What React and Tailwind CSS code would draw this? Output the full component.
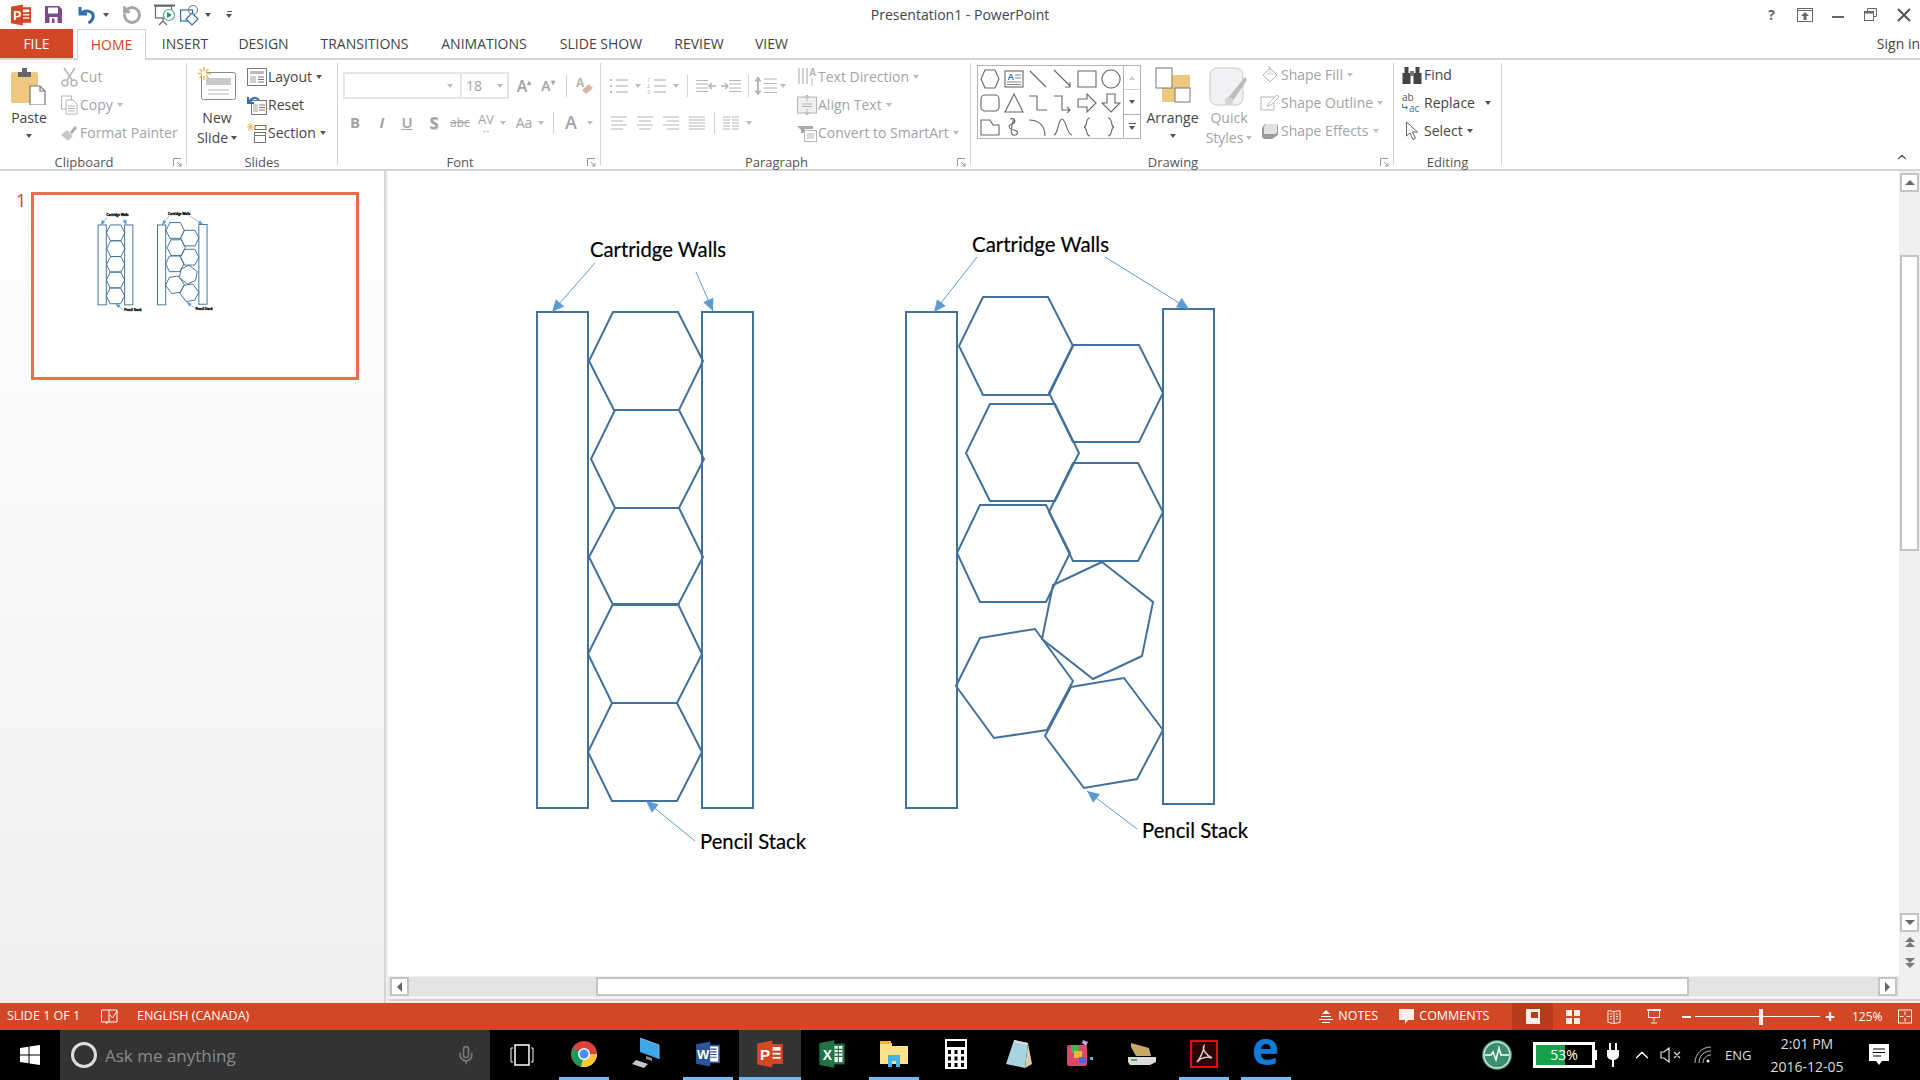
import { RotateCcw, Mic, ChevronUp } from "lucide-react";

const DIM = "text-[#a3a3a3]";

const Caret = ({ dark }) => (
  <span className={dark ? "inline-block w-0 h-0 border-x-[3.5px] border-t-[4px] border-x-transparent border-t-[#555]" : "inline-block w-0 h-0 border-x-[3.5px] border-t-[4px] border-x-transparent border-t-[#bdbdbd]"} />
);

const PptLogo = ({ size = 22 }) => (
  <svg width={size} height={size} viewBox="0 0 24 24">
    <rect x="11" y="3.5" width="12" height="17" fill="#d24726" />
    <rect x="14" y="6" width="7" height="3" fill="#fff" />
    <rect x="14" y="11" width="7" height="1.5" fill="#fff" />
    <rect x="14" y="14.5" width="7" height="1.5" fill="#fff" />
    <polygon points="1,3 14,0.5 14,23.5 1,21" fill="#d24726" />
    <text x="3.5" y="17" fontSize="13" fontWeight="700" fill="#fff" fontFamily="'Liberation Sans', sans-serif">P</text>
  </svg>
);

const SaveIcon = () => (
  <svg width="17" height="17" viewBox="0 0 17 17">
    <path d="M0 0h14l3 3v14H0z" fill="#80498f" />
    <rect x="3" y="1.5" width="10" height="6" fill="#fff" />
    <rect x="4.5" y="11" width="8" height="6" fill="#fff" />
    <rect x="7" y="12.5" width="2.5" height="4.5" fill="#80498f" />
  </svg>
);

const UndoIcon = () => (
  <svg width="20" height="20" viewBox="0 0 20 20" fill="none" stroke="#2f6fb0" strokeWidth="3">
    <path d="M3 2v7h7" />
    <path d="M3.5 9C6 5.5 11 5 14.5 7.5c3 2.5 2 7.5-3 10.5" />
  </svg>
);

const PresenterIcon = () => (
  <svg width="21" height="22" viewBox="0 0 21 22" fill="none" stroke="#666" strokeWidth="1.2">
    <path d="M0 1.5h21" strokeWidth="2" />
    <rect x="1.5" y="2" width="16" height="12" />
    <path d="M9 14v3M5 21l4-4 4 4" />
    <circle cx="15" cy="11" r="5.5" fill="#fff" stroke="#5fa98f" />
    <polygon points="13,8 18,11 13,14" fill="#2f8f6b" stroke="none" />
  </svg>
);

const ShapesQat = () => (
  <svg width="21" height="22" viewBox="0 0 21 22" fill="none" strokeWidth="1.2">
    <rect x="0.6" y="6" width="12" height="11" fill="#fff" stroke="#2f6fb0" />
    <circle cx="13" cy="6" r="4.5" stroke="#888" />
    <path d="M12 9l6 6-6 6-6-6z" fill="#fff" stroke="#2f6fb0" />
  </svg>
);

const PasteIcon = () => (
  <svg width="35" height="38" viewBox="0 0 35 38">
    <rect x="0" y="5" width="27" height="31" rx="2" fill="#edc87e" />
    <path d="M7 5h13v5H7z" fill="#666" />
    <rect x="11" y="1" width="5" height="5" fill="#666" />
    <path d="M19 19h10l5 5v14H19z" fill="#fff" stroke="#777" strokeWidth="1.2" />
    <path d="M29 19v5h5" fill="none" stroke="#777" strokeWidth="1.2" />
  </svg>
);

const CutIcon = () => (
  <svg width="17" height="20" viewBox="0 0 17 20" fill="none" stroke="#b5b5b5" strokeWidth="1.5">
    <path d="M3 1l8 12M14 1L6 13" />
    <circle cx="4" cy="16" r="3" />
    <circle cx="13" cy="16" r="3" />
  </svg>
);

const CopyIcon = () => (
  <svg width="17" height="20" viewBox="0 0 17 20" fill="#fff" stroke="#b5b5b5">
    <rect x="0.5" y="1" width="10" height="13" />
    <path d="M5 5h7l4 4v10H5z" />
    <path d="M7 11h7M7 13.5h7M7 16h7" />
  </svg>
);

const PainterIcon = () => (
  <svg width="18" height="18" viewBox="0 0 18 18">
    <path d="M1 11l6-5 6 6-5 5z" fill="#c8c8c8" />
    <path d="M10 8l5-6 2 2-5 6z" fill="#a8a8a8" />
  </svg>
);

const NewSlideIcon = () => (
  <svg width="38" height="33" viewBox="0 0 38 33">
    <rect x="3.5" y="5.5" width="34" height="27" rx="2" fill="#fff" stroke="#8a8a8a" />
    <rect x="8" y="11" width="25" height="7" fill="#c9c9c9" />
    <path d="M10 23h21M10 27h21" stroke="#b5b5b5" />
    <g stroke="#e8b45e" strokeWidth="1.5">
      <path d="M6 0v13M0 6.5h13M1.500 2l9 9M10.500 2l-9 9" />
    </g>
    <circle cx="6" cy="6.5" r="2.5" fill="#fff" />
  </svg>
);

const LayoutIcon = () => (
  <svg width="20" height="18" viewBox="0 0 20 18" fill="none" stroke="#777">
    <rect x="0.5" y="0.5" width="19" height="17" />
    <rect x="3" y="3" width="14" height="3" fill="#bbb" stroke="none" />
    <rect x="3" y="8" width="6" height="7" fill="#d0d0d0" stroke="none" />
    <path d="M11 9h6M11 11.5h6M11 14h6" />
  </svg>
);

const ResetIcon = () => (
  <svg width="20" height="20" viewBox="0 0 20 20" fill="none">
    <rect x="4.5" y="5.5" width="15" height="14" stroke="#777" fill="#fff" />
    <rect x="6" y="9" width="5" height="8" fill="#d0d0d0" />
    <path d="M12 10h6M12 12.5h6M12 15h6" stroke="#777" />
    <path d="M1 2v6h6M2 7c3-5 8-5 10-2" stroke="#2f6fb0" strokeWidth="2" />
  </svg>
);

const SectionIcon = () => (
  <svg width="20" height="20" viewBox="0 0 20 20" fill="none">
    <path d="M3 0v8M0 4h7M1 1l5 6M6 1l-5 6" stroke="#e8b45e" />
    <rect x="8" y="2.5" width="11" height="4" stroke="#d24726" />
    <rect x="7.5" y="9.5" width="11" height="10" stroke="#777" />
    <path d="M8 12.5h10" stroke="#777" />
  </svg>
);

const BulletsIcon = ({ nums }) => (
  <svg width="20" height="20" viewBox="0 0 20 20" stroke="#a8a8a8" fill="#a8a8a8">
    {nums ? (
      <>
        <text x="0" y="6" fontSize="5" stroke="none">1</text>
        <text x="0" y="12" fontSize="5" stroke="none">2</text>
        <text x="0" y="18" fontSize="5" stroke="none">3</text>
      </>
    ) : (
      <>
        <circle cx="2" cy="4" r="1" stroke="none" />
        <circle cx="2" cy="10" r="1" stroke="none" />
        <circle cx="2" cy="16" r="1" stroke="none" />
      </>
    )}
    <path d="M7 4h12M7 10h12M7 16h12" />
  </svg>
);

const IndentIcon = ({ flip }) => (
  <svg width="20" height="14" viewBox="0 0 20 14" fill="none" stroke="#b5b5b5" className={flip ? "-scale-x-100" : ""}>
    <path d="M8 1.5h12M8 5h12M8 9h12M8 12.5h12" />
    <path d="M0 7h7M4 4l3 3-3 3" strokeWidth="1.5" />
  </svg>
);

const LineSpacingIcon = () => (
  <svg width="24" height="24" viewBox="0 0 24 24" fill="none" stroke="#b5b5b5">
    <path d="M4 3v18" strokeWidth="2" />
    <path d="M1 7l3-4 3 4zM1 17l3 4 3-4z" fill="#b5b5b5" />
    <path d="M10 5h13M10 9.5h13M10 14h13M10 18.5h13" />
  </svg>
);

const AlignIcon = ({ kind }) => {
  const rows = {
    left: "M1 3h16M1 7h12M1 11h16M1 15h12",
    center: "M1 3h16M3 7h12M1 11h16M3 15h12",
    right: "M1 3h16M5 7h12M1 11h16M5 15h12",
    justify: "M1 3h16M1 6h16M1 9h16M1 12h16M1 15h16",
    columns: "M1 3h7M10 3h7M1 6h7M10 6h7M1 9h7M10 9h7M1 12h7M10 12h7M1 15h7M10 15h7",
  };
  return (
    <svg width="18" height="18" viewBox="0 0 18 18" fill="none" stroke="#b5b5b5">
      <path d={rows[kind]} />
    </svg>
  );
};

const TextDirIcon = () => (
  <svg width="20" height="20" viewBox="0 0 20 20" stroke="#b5b5b5" fill="none">
    <path d="M2 1v16M6 1v16M10 1v16" strokeWidth="1.2" />
    <text x="12" y="9" fontSize="10" fontWeight="700" fill="#b5b5b5" stroke="none" fontFamily="'Liberation Sans', sans-serif">A</text>
    <path d="M15 11v8" />
  </svg>
);

const AlignTextIcon = () => (
  <svg width="20" height="20" viewBox="0 0 20 20" stroke="#b5b5b5" fill="none">
    <rect x="0.5" y="2" width="19" height="16" fill="#f0f0f0" />
    <path d="M10 0v6M7.500 3L10 0l2.500 3M10 14v6M7.500 17l2.500 3 2.500-3M5 9h10M5 11.5h10" />
  </svg>
);

const SmartArtIcon = () => (
  <svg width="20" height="20" viewBox="0 0 20 20" stroke="#b5b5b5" fill="none">
    <path d="M0 3h16v3H8v4H4V7z" fill="#aaa" stroke="none" />
    <rect x="7.5" y="7.5" width="12" height="11" fill="#fff" />
    <path d="M10 11h7M10 13h7M10 15h7" />
  </svg>
);

const ShapeFillIcon = () => (
  <svg width="18" height="18" viewBox="0 0 18 18" fill="#fff" stroke="#b5b5b5">
    <path d="M2 9l7-7 7 7-7 7z" />
    <path d="M7 1c2-1 3 1 2 3" fill="none" />
    <path d="M4 9l5-5 5 5" fill="#e5e5e5" stroke="none" />
  </svg>
);

const ShapeOutlineIcon = () => (
  <svg width="20" height="18" viewBox="0 0 20 18" fill="none" stroke="#b5b5b5">
    <path d="M14 3H1v13h13V9" />
    <path d="M7 12l2-3 8-8 2 2-8 8z" fill="#fff" />
  </svg>
);

const ShapeEffectsIcon = () => (
  <svg width="18" height="18" viewBox="0 0 18 18">
    <path d="M4 2h12l1 2v9l-6 4H3l-2-2V6z" fill="#9a9a9a" />
    <path d="M5 2h11v8c0 1-1 2-2 2H3V5z" fill="#e2e2e2" />
  </svg>
);

const BinocularsIcon = () => (
  <svg width="20" height="18" viewBox="0 0 20 18" fill="#444">
    <rect x="0.5" y="7" width="8" height="11" />
    <rect x="11.5" y="7" width="8" height="11" />
    <rect x="2.5" y="1" width="4" height="7" />
    <rect x="13.5" y="1" width="4" height="7" />
    <rect x="8" y="5" width="4" height="5" fill="#777" />
  </svg>
);

const ReplaceIcon = () => (
  <svg width="22" height="22" viewBox="0 0 22 22" fontFamily="'Open Sans', sans-serif">
    <text x="1" y="9" fontSize="10" fill="#555">ab</text>
    <path d="M1.500 12v3.500H6M4.500 14l2 1.500-2 1.500" fill="none" stroke="#2f6fb0" />
    <text x="8" y="20" fontSize="10" fill="#2f6fb0">ac</text>
  </svg>
);

const CursorIcon = () => (
  <svg width="14" height="20" viewBox="0 0 14 20" fill="#fff" stroke="#666">
    <path d="M1.500 1v14l3.500-3 3 6.500 2.500-1.200-3-6.300h5z" />
  </svg>
);

const ArrangeIcon = () => (
  <svg width="36" height="36" viewBox="0 0 36 36">
    <rect x="17" y="8" width="18" height="13" fill="#edc87e" />
    <rect x="7" y="21" width="16" height="14" fill="#edc87e" />
    <rect x="1" y="1" width="16" height="20" fill="#fff" stroke="#777" />
    <rect x="20" y="21" width="15" height="14" fill="#fff" stroke="#777" />
  </svg>
);

const QuickStylesIcon = () => (
  <svg width="40" height="42" viewBox="0 0 40 42">
    <rect x="1" y="1" width="33" height="37" rx="7" fill="#f3f0f5" stroke="#c8c8c8" />
    <path d="M38 13L23 35l-5 2 1-6 17-21z" fill="#bbb" />
    <circle cx="20" cy="34" r="4" fill="#d5d5d5" />
  </svg>
);

// gallery shape thumbnails, 6 x 3
const galleryPaths = [
  "M5 1h10l4 9-4 9H5l-4-9z",
  null,
  "M2 2l16 16",
  "M1 1l16 16M12 18h5v-5",
  "M1 2h18v16H1z",
  "M10 1a9 9 0 1 0 .01 0z",
  "M5 2h10a4 4 0 0 1 4 4v8a4 4 0 0 1-4 4H5a4 4 0 0 1-4-4V6a4 4 0 0 1 4-4z",
  "M10 1L19 19H1z",
  "M1 3h8v14h10",
  "M1 3h8v14h8M14 14l3 3-3 3",
  "M1 6h9V1l9 9-9 9v-5H1z",
  "M6 1h8v9h5l-9 9-9-9h5z",
  "M1 3h9l3 5h6v10H1V8z",
  "M6 2c6-2 6 4 2 5s-4 5 2 6 3 6-1 5 0-14 1-16",
  "M1 3c9 0 16 5 16 16",
  "M1 18C5 18 5 2 9 2s5 16 10 16",
  "M13 1c-5 0-2 8-6 9 4 1 1 9 6 9",
  "M7 1c5 0 2 8 6 9-4 1-1 9-6 9",
];

const Gallery = () => (
  <div className="flex w-[164px] h-[74px] border border-[#b4b4b4]">
    <div className="grid grid-cols-6 w-[146px] pt-px">
      {galleryPaths.map((d, i) => (
        <div key={i} className="flex items-center justify-center h-6">
          <svg width="20" height="20" viewBox="0 0 20 20" fill="none" stroke="#666" strokeWidth="1.1">
            {d ? (
              <path d={d} />
            ) : (
              <>
                <rect x="1" y="2" width="18" height="16" />
                <text x="3.5" y="11" fontSize="9" fontWeight="700" fill="#2f6fb0" stroke="none" fontFamily="'Liberation Sans', sans-serif">A</text>
                <path d="M11 6h6M11 9h6M3 13h14M3 15.500h14" strokeWidth="0.8" />
              </>
            )}
          </svg>
        </div>
      ))}
    </div>
    <div className="flex flex-col w-[17px] border-l border-[#b4b4b4]">
      <div className="flex flex-1 items-center justify-center border-b border-[#d0d0d0]">
        <span className="w-0 h-0 border-x-[3.5px] border-b-[4px] border-x-transparent border-b-[#ccc]" />
      </div>
      <div className="flex flex-1 items-center justify-center border-b border-[#b4b4b4]">
        <Caret dark />
      </div>
      <div className="flex flex-col flex-1 items-center justify-center gap-[2px]">
        <span className="w-[7px] h-px bg-[#555]" />
        <Caret dark />
      </div>
    </div>
  </div>
);

const Group = ({ className, label, launcher, children }) => (
  <div className={"flex flex-col h-full shrink-0 border-r border-[#d4d4d4] " + className}>
    <div className="flex flex-1 min-h-0">{children}</div>
    <div className="grid grid-cols-[1fr_auto_1fr] h-[14px] items-center text-[13px] leading-none text-[#555]">
      <span />
      <span className={launcher ? "mt-[5px] mr-[18px]" : "mt-[5px]"}>{label}</span>
      {launcher ? (
        <svg className="justify-self-end mr-[4px] mt-[5px]" width="9" height="9" viewBox="0 0 9 9" fill="none" stroke="#999">
          <path d="M0.5 8V0.5H8M4 4l4 4M8 5v3H5" />
        </svg>
      ) : (
        <span />
      )}
    </div>
  </div>
);

const RowBtn = ({ icon, label, caret, dim, iconClass, textClass }) => (
  <div className={"flex items-center h-[28px] text-[14px] leading-none whitespace-nowrap " + (dim ? DIM : "text-[#444]")}>
    <span className={"flex items-center justify-center shrink-0 " + (iconClass || "w-[22px]")}>{icon}</span>
    <span className={textClass}>{label}</span>
    {caret && (
      <span className="ml-[4px] flex items-center">
        <Caret dark={!dim} />
      </span>
    )}
  </div>
);

const Cell = ({ className, children }) => (
  <span className={"flex items-center justify-center shrink-0 " + className}>{children}</span>
);

const Sep = ({ className }) => <span className={"w-px h-[22px] bg-[#d4d4d4] shrink-0 " + className} />;

const Ribbon = () => (
  <div className="flex h-[111px] pt-[3px] pb-[4px] border-b-2 border-[#d4d4d4] bg-white">
    <Group className="w-[187px]" label="Clipboard" launcher>
      <div className="flex flex-col items-center w-[50px] ml-[4px] pt-[4px] text-[14px] text-[#444]">
        <div className="-ml-[2px]"><PasteIcon /></div>
        <span className="mt-[4px] leading-[18px]">Paste</span>
        <span className="mt-[7px] flex"><Caret dark /></span>
      </div>
      <div className="flex flex-col ml-[4px]">
        <RowBtn dim icon={<CutIcon />} label="Cut" />
        <RowBtn dim icon={<CopyIcon />} label="Copy" caret />
        <RowBtn dim icon={<PainterIcon />} label="Format Painter" />
      </div>
    </Group>
    <Group className="w-[151px]" label="Slides">
      <div className="flex flex-col items-center w-[44px] ml-[8px] pt-[4px] text-[14px] text-[#444] whitespace-nowrap">
        <NewSlideIcon />
        <span className="mt-[9px] leading-[18px]">New</span>
        <span className="flex items-center gap-[3px] leading-[21px]">Slide <Caret dark /></span>
      </div>
      <div className="flex flex-col ml-[6px]">
        <RowBtn iconClass="w-[23px]" icon={<LayoutIcon />} label="Layout" caret />
        <RowBtn iconClass="w-[23px]" icon={<ResetIcon />} label="Reset" />
        <RowBtn iconClass="w-[23px]" icon={<SectionIcon />} label="Section" caret />
      </div>
    </Group>
    <Group className="w-[263px]" label="Font" launcher>
      <div className={"flex flex-col pl-[5px] pt-[9px] text-[15px] font-semibold " + DIM}>
        <div className="flex items-center h-[27px]">
          <div className="flex items-center justify-end w-[119px] h-full border-2 border-[#e6e6e6] pr-[7px]"><Caret /></div>
          <div className="flex items-center justify-between w-[47px] h-full border-2 border-l-0 border-[#e6e6e6] px-[4px] font-normal text-[14px]">18 <Caret /></div>
          <Cell className="w-6 ml-[3px] text-[16px]">A<sup className="text-[8px]">▴</sup></Cell>
          <Cell className="w-6 text-[14px]">A<sup className="text-[8px]">▾</sup></Cell>
          <Sep className="ml-[6px]" />
          <Cell className="w-6 ml-[6px]">
            <svg width="18" height="20" viewBox="0 0 18 20">
              <text x="0" y="11" fontSize="12" fontWeight="700" fill="#b5b5b5" fontFamily="'Open Sans', sans-serif">A</text>
              <path d="M6 14l7-6 4 4-7 6z" fill="#d8b4a8" />
            </svg>
          </Cell>
        </div>
        <div className="flex items-center h-[27px] mt-[10px]">
          <Cell className="w-6 font-bold">B</Cell>
          <Cell className="w-6 ml-[3px] italic font-bold">I</Cell>
          <Cell className="w-6 ml-px underline">U</Cell>
          <Cell className="w-6 ml-[3px] font-bold text-[16px] [text-shadow:1px_1px_1px_#ccc]">S</Cell>
          <Cell className="w-6 ml-[2px] text-[12px] font-normal line-through">abc</Cell>
          <Cell className="w-6 ml-[2px] flex-col text-[13px] leading-[12px] font-normal">AV<span className="text-[10px] leading-[8px]">↔</span></Cell>
          <Cell className="w-[10px]"><Caret /></Cell>
          <Cell className="w-6 ml-1 text-[14px] font-normal">Aa</Cell>
          <Cell className="w-[10px]"><Caret /></Cell>
          <Sep className="ml-[7px]" />
          <Cell className="w-6 ml-[5px] text-[18px]">A</Cell>
          <Cell className="w-[10px] ml-[2px]"><Caret /></Cell>
        </div>
      </div>
    </Group>
    <Group className="w-[370px]" label="Paragraph" launcher>
      <div className="flex flex-col w-[195px] pl-[6px] pt-[9px]">
        <div className="flex items-center h-[27px]">
          <Cell className="w-6"><BulletsIcon /></Cell>
          <Cell className="w-[10px] ml-[2px]"><Caret /></Cell>
          <Cell className="w-6 ml-[2px]"><BulletsIcon nums /></Cell>
          <Cell className="w-[10px] ml-[2px]"><Caret /></Cell>
          <Sep className="ml-[6px]" />
          <Cell className="w-6 ml-[6px]"><IndentIcon flip /></Cell>
          <Cell className="w-6 ml-px"><IndentIcon /></Cell>
          <Sep className="ml-[5px]" />
          <Cell className="w-6 ml-[5px]"><LineSpacingIcon /></Cell>
          <Cell className="w-[10px]"><Caret /></Cell>
        </div>
        <div className="flex items-center h-[27px] mt-[10px]">
          <Cell className="w-6"><AlignIcon kind="left" /></Cell>
          <Cell className="w-6 ml-[2px]"><AlignIcon kind="center" /></Cell>
          <Cell className="w-6 ml-[2px]"><AlignIcon kind="right" /></Cell>
          <Cell className="w-6 ml-[2px]"><AlignIcon kind="justify" /></Cell>
          <Sep className="ml-[5px]" />
          <Cell className="w-6 ml-[4px]"><AlignIcon kind="columns" /></Cell>
          <Cell className="w-[10px] ml-px"><Caret /></Cell>
        </div>
      </div>
      <div className="flex flex-col">
        <RowBtn dim icon={<TextDirIcon />} label="Text Direction" caret />
        <RowBtn dim icon={<AlignTextIcon />} label="Align Text" caret />
        <RowBtn dim icon={<SmartArtIcon />} label="Convert to SmartArt" caret />
      </div>
    </Group>
    <Group className="w-[423px]" label="Drawing" launcher>
      <div className="ml-[6px] pt-[2px]"><Gallery /></div>
      <div className="flex flex-col items-center w-[53px] ml-[5px] pt-[4px] text-[14px] text-[#444]">
        <ArrangeIcon />
        <span className="mt-[6px] leading-[18px]">Arrange</span>
        <span className="mt-[7px] flex"><Caret dark /></span>
      </div>
      <div className={"flex flex-col items-center w-[48px] ml-[6px] pt-[4px] text-[14px] whitespace-nowrap " + DIM}>
        <QuickStylesIcon />
        <span className="leading-[18px]">Quick</span>
        <span className="flex items-center gap-[3px] leading-[21px]">Styles <Caret /></span>
      </div>
      <div className="flex flex-col ml-[5px] -mt-[2px]">
        <RowBtn dim iconClass="w-[23px]" icon={<ShapeFillIcon />} label="Shape Fill" caret />
        <RowBtn dim iconClass="w-[23px]" icon={<ShapeOutlineIcon />} label="Shape Outline" caret />
        <RowBtn dim iconClass="w-[23px]" icon={<ShapeEffectsIcon />} label="Shape Effects" caret />
      </div>
    </Group>
    <Group className="w-[108px]" label="Editing">
      <div className="flex flex-col pl-[6px] -mt-[2px]">
        <RowBtn iconClass="w-[24px]" icon={<BinocularsIcon />} label="Find" />
        <div className="flex items-center">
          <RowBtn iconClass="w-[24px]" icon={<ReplaceIcon />} label="Replace" />
          <span className="ml-[10px] flex"><Caret dark /></span>
        </div>
        <RowBtn iconClass="w-[24px]" icon={<CursorIcon />} label="Select" caret />
      </div>
    </Group>
    <div className="flex flex-1 items-end justify-end pr-[11px] pb-[1px]">
      <ChevronUp size={14} strokeWidth={2} color="#555" />
    </div>
  </div>
);

const TitleBar = () => (
  <div className="grid grid-cols-[1fr_auto_1fr] h-[29px] items-center bg-white">
    <div className="flex items-center">
      <Cell className="w-[22px] ml-[10px]"><PptLogo /></Cell>
      <Cell className="w-[17px] ml-[13px]"><SaveIcon /></Cell>
      <Cell className="w-5 ml-[15px]"><UndoIcon /></Cell>
      <Cell className="w-2 ml-[5px]"><Caret dark /></Cell>
      <Cell className="w-5 ml-[12px]"><RotateCcw size={20} strokeWidth={3.5} color="#a6a6a6" /></Cell>
      <Cell className="w-[21px] ml-[12px]"><PresenterIcon /></Cell>
      <Cell className="w-[21px] ml-[5px]"><ShapesQat /></Cell>
      <Cell className="w-2 ml-[3px]"><Caret dark /></Cell>
      <Cell className="w-2 ml-[13px] flex-col gap-[2px]"><span className="w-[5px] h-px bg-[#555]" /><Caret dark /></Cell>
    </div>
    <span className="text-[14px] leading-none text-[#444]">Presentation1 - PowerPoint</span>
    <div className="flex justify-end text-[#666]">
      <Cell className="w-[33px] font-bold text-[14px]">?</Cell>
      <Cell className="w-[33px]">
        <svg width="16" height="14" viewBox="0 0 16 14" fill="none" stroke="#666">
          <rect x="0.5" y="0.5" width="15" height="13" />
          <path d="M0 2.5h16" />
          <path d="M8 4l4 4H9.500v4h-3V8H4z" fill="#666" stroke="none" />
        </svg>
      </Cell>
      <Cell className="w-[33px]"><span className="w-[12px] h-[2px] mt-[5px] bg-[#666]" /></Cell>
      <Cell className="w-[33px]">
        <svg width="13" height="13" viewBox="0 0 13 13" fill="none" stroke="#666">
          <path d="M3.500 3V0.500h9v8H10" />
          <rect x="0.5" y="3.5" width="9" height="9" fill="#fff" />
          <path d="M0.5 4.5h9" strokeWidth="2" />
        </svg>
      </Cell>
      <Cell className="w-[33px]">
        <svg width="14" height="14" viewBox="0 0 14 14" stroke="#555" strokeWidth="2">
          <path d="M1 1l12 12M13 1L1 13" />
        </svg>
      </Cell>
    </div>
  </div>
);

const tabClass = "flex items-center justify-center shrink-0 ";

const Tabs = () => (
  <div className="flex h-[31px] border-b-2 border-[#d4d4d4] text-[14px] leading-none text-[#444] bg-white">
    <div className={tabClass + "w-[73px] bg-[#d24726] text-white"}>FILE</div>
    <div className={tabClass + "w-[69px] ml-[4px] bg-white text-[#d24726] border-x border-t border-[#d4d4d4] h-[31px]"}>HOME</div>
    <div className={tabClass + "w-[78px]"}>INSERT</div>
    <div className={tabClass + "w-[79px]"}>DESIGN</div>
    <div className={tabClass + "w-[123px]"}>TRANSITIONS</div>
    <div className={tabClass + "w-[116px]"}>ANIMATIONS</div>
    <div className={tabClass + "w-[118px]"}>SLIDE SHOW</div>
    <div className={tabClass + "w-[78px]"}>REVIEW</div>
    <div className={tabClass + "w-[67px]"}>VIEW</div>
    <div className="flex flex-1 items-center justify-end whitespace-nowrap">Sign in</div>
  </div>
);

const WALL_BLUE = "#41719c";
const ARROW_BLUE = "#5b9bd5";

const walls = [
  [537, 312, 51, 496],
  [702, 312, 51, 496],
  [906, 312, 51, 496],
  [1163, 309, 51, 495],
];

const hexagons = [
  "613,312 678,312 703,361 679,410 614,410 589,361",
  "615,410 679,410 704,459 679,508 615,508 591,459",
  "615,508 679,508 703,557 678,605 613,605 589,557",
  "613,604 678,604 702,654 677,703 612,703 588,654",
  "612,703 677,703 702,752 677,801 612,801 588,752",
  "983,297 1048,297 1073,346 1049,395 983,395 959,346",
  "1073,345 1139,345 1163,393 1139,442 1073,442 1049,393",
  "990,404 1055,404 1079,453 1055,501 990,501 966,453",
  "1073,463 1138,463 1163,512 1138,561 1073,561 1049,512",
  "980,505 1046,505 1070,553 1046,602 980,602 957,553",
  "1102,562 1153,602 1142,656 1093,679 1042,639 1053,585",
  "980,638 1035,629 1073,681 1047,730 994,738 956,686",
  "1071,687 1124,678 1163,730 1137,779 1084,788 1045,736",
];

const arrows = [
  [595, 263, 552, 312],
  [696, 272, 713, 311],
  [977, 257, 934, 312],
  [1105, 257, 1189, 309],
  [695, 841, 646, 801],
  [1137, 829, 1087, 791],
];

const labels = [
  ["Cartridge Walls", 590, 257, 136],
  ["Cartridge Walls", 972, 252, 137],
  ["Pencil Stack", 700, 849, 106],
  ["Pencil Stack", 1142, 838, 106],
];

function arrowHead(x1, y1, x2, y2, len, half) {
  const d = Math.hypot(x2 - x1, y2 - y1);
  const ux = (x2 - x1) / d;
  const uy = (y2 - y1) / d;
  const bx = x2 - ux * len;
  const by = y2 - uy * len;
  return `${x2},${y2} ${bx - uy * half},${by + ux * half} ${bx + uy * half},${by - ux * half}`;
}

const Drawing = ({ stroke, arrowStroke, len, half, textStroke }) => (
  <g fill="none">
    {walls.map(([x, y, w, h], i) => (
      <rect key={i} x={x} y={y} width={w} height={h} stroke={WALL_BLUE} strokeWidth={stroke} />
    ))}
    {hexagons.map((p, i) => (
      <polygon key={i} points={p} stroke={WALL_BLUE} strokeWidth={stroke} />
    ))}
    {arrows.map(([x1, y1, x2, y2], i) => (
      <g key={i}>
        <line x1={x1} y1={y1} x2={x2} y2={y2} stroke={ARROW_BLUE} strokeWidth={arrowStroke} />
        <polygon points={arrowHead(x1, y1, x2, y2, len, half)} fill={ARROW_BLUE} />
      </g>
    ))}
    {labels.map(([t, x, y, w], i) => (
      <text key={i} x={x} y={y} fontSize="21" fill="#000" textLength={w} lengthAdjust="spacingAndGlyphs" fontFamily="Lato, 'Open Sans', sans-serif" stroke="#000" strokeWidth={textStroke}>
        {t}
      </text>
    ))}
  </g>
);

const ScrollBtn = ({ children }) => (
  <div className="flex items-center justify-center w-[19px] h-[19px] shrink-0 bg-white border-2 border-[#c4c4c4]">{children}</div>
);

const Workspace = () => (
  <div className="flex flex-1 min-h-0">
    <div className="flex items-start w-[386px] shrink-0 pt-[21px] pl-[16px] border-r-2 border-[#d4d4d4] bg-gradient-to-b from-white to-[#f0f0f0]">
      <span className="w-[15px] text-[18px] leading-[16px] text-[#d24726]">1</span>
      <div className="w-[328px] h-[188px] border-[3px] border-[#ed6c4d] bg-white">
        <svg className="block" width="322" height="182" viewBox="139 126 2000 1130">
          <Drawing stroke={6} arrowStroke={4} len={30} half={12} textStroke={2} />
        </svg>
      </div>
    </div>
    <div className="flex flex-col flex-1 min-w-0 bg-[#f0f0f0]">
      <div className="flex flex-1 min-h-0 pl-[2px]">
        <div className="flex-1 bg-white">
          <svg className="block" width="1511" height="805" viewBox="388 171 1511 805">
            <Drawing stroke={2} arrowStroke={1} len={12} half={5.5} textStroke={0.2} />
          </svg>
        </div>
        <div className="flex flex-col w-[21px] pl-px pt-[2px]">
          <ScrollBtn><span className="w-0 h-0 border-x-[5px] border-b-[5px] border-x-transparent border-b-[#666]" /></ScrollBtn>
          <div className="h-[63px] shrink-0" />
          <div className="w-[19px] h-[296px] shrink-0 bg-white border-2 border-[#c4c4c4]" />
          <div className="flex-1" />
          <ScrollBtn><span className="w-0 h-0 border-x-[5px] border-t-[5px] border-x-transparent border-t-[#666]" /></ScrollBtn>
          <div className="flex flex-col items-center w-[19px] h-[44px] pt-[5px] gap-[11px] shrink-0">
            <span className="flex flex-col items-center">
              <span className="w-0 h-0 border-x-[5px] border-b-[5px] border-x-transparent border-b-[#777]" />
              <span className="w-0 h-0 border-x-[5px] border-b-[5px] border-x-transparent border-b-[#777]" />
            </span>
            <span className="flex flex-col items-center">
              <span className="w-0 h-0 border-x-[5px] border-t-[5px] border-x-transparent border-t-[#777]" />
              <span className="w-0 h-0 border-x-[5px] border-t-[5px] border-x-transparent border-t-[#777]" />
            </span>
          </div>
        </div>
      </div>
      <div className="flex flex-col h-[27px] shrink-0 pl-[2px]">
        <div className="flex h-[19px] mt-px mr-[21px] pl-[2px] pr-[2px] bg-[#e3e3e3]">
          <ScrollBtn><span className="w-0 h-0 border-y-[5px] border-r-[5px] border-y-transparent border-r-[#666]" /></ScrollBtn>
          <div className="w-[187px] shrink-0" />
          <div className="w-[1093px] shrink-0 bg-white border-2 border-[#c4c4c4]" />
          <div className="flex-1" />
          <ScrollBtn><span className="w-0 h-0 border-y-[5px] border-l-[5px] border-y-transparent border-l-[#666]" /></ScrollBtn>
        </div>
        <div className="h-[2px] mt-[3px] bg-[#d4d4d4]" />
      </div>
    </div>
  </div>
);

const StatusBar = () => (
  <div className="flex items-center h-[27px] shrink-0 bg-[#d24726] text-[12.5px] leading-none text-white whitespace-nowrap">
    <span className="ml-[7px] w-[94px]">SLIDE 1 OF 1</span>
    <svg width="17" height="15" viewBox="0 0 17 15" fill="none" stroke="#fff">
      <path d="M0.5 1h7.500v12H0.500zM8 1h8v12H8M5 13l1 2M9 6l2.500 3L16 2" />
    </svg>
    <span className="ml-[19px]">ENGLISH (CANADA)</span>
    <div className="flex-1" />
    <svg className="mr-[5px]" width="14" height="14" viewBox="0 0 14 14" fill="#fff">
      <path d="M7 0l4 4H3z" />
      <path d="M2 6h10v1H2zM0 9h14v1H0zM3 12h8v1H3z" />
    </svg>
    <span className="w-[61px]">NOTES</span>
    <svg className="mr-[5px]" width="15" height="16" viewBox="0 0 15 16" fill="#fdeee9">
      <path d="M0 0h15v11H9l-3 4v-4H0z" />
    </svg>
    <span className="w-[93px]">COMMENTS</span>
    <Cell className="w-[41px] h-[27px] bg-[#b83b1d]">
      <svg width="14" height="15" viewBox="0 0 14 15">
        <rect width="14" height="15" fill="#fdeee9" />
        <rect x="5" y="3" width="7" height="6" fill="#b83b1d" />
      </svg>
    </Cell>
    <Cell className="w-[40px]">
      <svg width="14" height="14" viewBox="0 0 14 14" fill="#fdeee9">
        <rect width="6" height="6" />
        <rect x="8" width="6" height="6" />
        <rect y="8" width="6" height="6" />
        <rect x="8" y="8" width="6" height="6" />
      </svg>
    </Cell>
    <Cell className="w-[41px]">
      <svg width="14" height="14" viewBox="0 0 14 14" fill="none" stroke="#fdeee9">
        <path d="M7 1.500L1 0.500v12l6 1 6-1V0.500zM7 1.500v12M3 4h2M3 6.500h2M3 9h2M9 4h2M9 6.500h2M9 9h2" />
      </svg>
    </Cell>
    <Cell className="w-[40px]">
      <svg width="14" height="15" viewBox="0 0 14 15" fill="none" stroke="#fdeee9">
        <path d="M0 1h14" strokeWidth="2" />
        <rect x="1.5" y="1.5" width="11" height="7" />
        <path d="M7 8.500v4M4 14h6" />
      </svg>
    </Cell>
    <span className="w-[9px] h-[2px] ml-[8px] bg-white" />
    <div className="relative flex items-center w-[125px] ml-[4px]">
      <span className="w-full h-px bg-white" />
      <span className="absolute left-[64px] w-[4px] h-[16px] bg-[#fdeee9]" />
    </div>
    <span className="ml-[5px] text-[17px] font-bold leading-none">+</span>
    <span className="w-[31px] ml-[17px] text-[12px]">125%</span>
    <Cell className="w-[14px] ml-[15px] mr-[8px]">
      <svg width="15" height="15" viewBox="0 0 15 15" fill="none" stroke="#fff">
        <rect x="0.5" y="0.5" width="14" height="14" />
        <path d="M7.500 2v4M7.500 9v4M2 7.500h4M9 7.500h4" />
      </svg>
    </Cell>
  </div>
);

const TaskIcon = ({ children, active, bar }) => (
  <div className={active ? "flex flex-col w-[62px] h-full shrink-0 bg-[#333]" : "flex flex-col w-[62px] h-full shrink-0"}>
    <div className="flex flex-1 items-center justify-center">{children}</div>
    {bar ? <div className={active ? "h-[3px] bg-[#76b9ed]" : "h-[3px] mx-[6px] bg-[#76b9ed]"} /> : <div className="h-[3px]" />}
  </div>
);

const Chrome = () => (
  <svg width="26" height="26" viewBox="0 0 26 26">
    <circle cx="13" cy="13" r="13" fill="#dc4437" />
    <path d="M13 13L2 7A13 13 0 0 0 10 25.700z" fill="#1d9a57" />
    <path d="M13 13h13A13 13 0 0 1 10 25.700z" fill="#fcc934" />
    <circle cx="13" cy="13" r="6" fill="#fff" />
    <circle cx="13" cy="13" r="4.5" fill="#4b8cf5" />
  </svg>
);

const MonitorIcon = () => (
  <svg width="28" height="32" viewBox="0 0 28 32">
    <path d="M8 0l19 7v14L8 14z" fill="#3fa6ea" />
    <path d="M8 0l19 7v14" fill="none" stroke="#9ac" />
    <path d="M4 22l12 4-4 4L0 26z" fill="#c8c8c8" />
    <path d="M14 18l6 2v3l-6-2z" fill="#888" />
  </svg>
);

const WordIcon = () => (
  <svg width="26" height="26" viewBox="0 0 24 24">
    <rect x="11" y="3.5" width="12" height="17" fill="#2b579a" />
    <rect x="13" y="5" width="8.5" height="14" fill="#fff" />
    <path d="M14 7.500h6M14 10h6M14 12.500h6M14 15h6" stroke="#2b579a" />
    <polygon points="1,3 14,0.5 14,23.5 1,21" fill="#2b579a" />
    <text x="1.8" y="16.5" fontSize="12" fontWeight="700" fill="#fff" fontFamily="'Liberation Sans', sans-serif">W</text>
  </svg>
);

const ExcelIcon = () => (
  <svg width="28" height="30" viewBox="0 0 24 26">
    <rect x="11" y="4" width="12" height="18" fill="#217346" />
    <rect x="14" y="6" width="7" height="14" fill="#fff" />
    <path d="M14 9h7M14 12h7M14 15h7M17.500 6v14" stroke="#217346" />
    <polygon points="1,3.5 14,1 14,25 1,22.5" fill="#217346" />
    <text x="4" y="18" fontSize="12" fontWeight="700" fill="#fff" fontFamily="'Liberation Sans', sans-serif">X</text>
  </svg>
);

const Explorer = () => (
  <svg width="28" height="26" viewBox="0 0 28 26">
    <path d="M0 2h12v3h16v18H0z" fill="#fde08a" />
    <path d="M0 0h11v3H0z" fill="#f2b53a" />
    <path d="M8 14h12v12h-4v-6h-4v6H8z" fill="#3fb3ea" />
  </svg>
);

const Calc = () => (
  <svg width="22" height="30" viewBox="0 0 22 30">
    <rect width="22" height="30" fill="#fff" />
    <rect x="2" y="2" width="18" height="6" fill="#000" />
    <path d="M3 11h3v4H3zM9.500 11h3v4h-3zM16 11h3v4h-3zM3 17.500h3v4H3zM9.500 17.500h3v4h-3zM16 17.500h3v4h-3zM3 24h3v4H3zM9.500 24h3v4h-3zM16 24h3v4h-3z" fill="#000" />
  </svg>
);

const Notepad = () => (
  <svg width="28" height="28" viewBox="0 0 28 28">
    <path d="M10 0l14 3-3 25-19-4z" fill="#a8d4e0" />
    <path d="M10 0l14 3-1 2-13-3z" fill="#ddd" />
    <path d="M21 28l3-25 4 21z" fill="#d6cfa8" />
  </svg>
);

const Rar = () => (
  <svg width="28" height="30" viewBox="0 0 28 30">
    <rect x="1" y="6" width="20" height="21" rx="2" fill="#d94a6a" />
    <rect x="5" y="6" width="8" height="8" fill="#4caf50" />
    <rect x="8" y="12" width="8" height="7" fill="#f2b53a" />
    <rect x="13" y="18" width="7" height="6" fill="#3f6fd8" />
    <path d="M17 1l5 2-2 4-4-3z" fill="#c9a0e8" />
    <rect x="24" y="18" width="3" height="3" fill="#3fc7e8" />
  </svg>
);

const Scanner = () => (
  <svg width="28" height="22" viewBox="0 0 28 22">
    <path d="M3 0l18 5 2 8H8L3 4z" fill="#c8a868" />
    <path d="M0 14h28v5l-6 3H2l-2-3z" fill="#dcdcdc" />
    <rect x="3" y="16" width="6" height="2" fill="#4caf50" />
  </svg>
);

const Acrobat = () => (
  <div className="flex items-center justify-center w-[28px] h-[28px] bg-[#2a0505] border-2 border-[#e01010]">
    <svg width="20" height="20" viewBox="0 0 20 20" fill="none" stroke="#d8c8c8" strokeWidth="1.5">
      <path d="M10 2c-2 3 2 9 8 12-6-2-12 0-15 4 3-3 7-12 7-16z" />
    </svg>
  </div>
);

const Edge = () => (
  <svg width="28" height="34" viewBox="0 0 28 34" className="overflow-visible">
    <text x="0" y="28" fontSize="46" fontWeight="700" fill="#0f7cd6" fontFamily="'Open Sans', sans-serif">e</text>
  </svg>
);

const Taskbar = () => (
  <div className="flex items-center h-[50px] shrink-0 bg-black text-white">
    <Cell className="w-[60px] h-full">
      <svg width="20" height="20" viewBox="0 0 20 20" fill="#fff">
        <path d="M0 3l8.500-1.200V9.500H0zM9.500 1.600L20 0v9.500H9.500zM0 10.500h8.500v7.700L0 17zM9.500 10.500H20V20l-10.500-1.600z" />
      </svg>
    </Cell>
    <div className="flex items-center w-[430px] h-full shrink-0 pl-[11px] bg-[#333]">
      <span className="w-[26px] h-[26px] rounded-full border-[3px] border-[#ddd]" />
      <span className="ml-[8px] flex-1 text-[17px] leading-none text-[#8a8a8a] font-['Open_Sans']">Ask me anything</span>
      <Mic size={20} color="#777" className="mr-[14px]" />
    </div>
    <Cell className="w-[63px] h-full">
      <svg width="24" height="22" viewBox="0 0 24 22" fill="none" stroke="#fff" strokeWidth="1.5">
        <rect x="5" y="1" width="14" height="20" />
        <path d="M3 4H1v14h2M21 4h2v14h-2" strokeWidth="1" />
      </svg>
    </Cell>
    <TaskIcon bar><Chrome /></TaskIcon>
    <TaskIcon><MonitorIcon /></TaskIcon>
    <TaskIcon bar><WordIcon /></TaskIcon>
    <TaskIcon active bar><PptLogo size={28} /></TaskIcon>
    <TaskIcon><ExcelIcon /></TaskIcon>
    <TaskIcon bar><Explorer /></TaskIcon>
    <TaskIcon><Calc /></TaskIcon>
    <TaskIcon><Notepad /></TaskIcon>
    <TaskIcon><Rar /></TaskIcon>
    <TaskIcon><Scanner /></TaskIcon>
    <TaskIcon bar><Acrobat /></TaskIcon>
    <TaskIcon bar><Edge /></TaskIcon>
    <div className="flex-1" />
    <svg className="shrink-0" width="30" height="30" viewBox="0 0 30 30" fill="none">
      <circle cx="15" cy="15" r="15" fill="#3a8f6c" />
      <circle cx="15" cy="15" r="13" fill="none" stroke="#cfe7dc" strokeWidth="1.5" />
      <path d="M3 15h6l2-3 3 8 3-12 2 7h8" stroke="#fff" strokeWidth="1.5" />
    </svg>
    <div className="flex h-[26px] w-[62px] ml-[21px] border-[3px] border-white text-[14px] leading-none relative">
      <span className="w-[29px] bg-[#19a04b]" />
      <span className="flex-1 bg-black" />
      <span className="absolute inset-0 flex items-center justify-center">53%</span>
    </div>
    <span className="w-[2px] h-[10px] bg-white" />
    <Cell className="w-6 ml-[4px]">
      <svg width="14" height="24" viewBox="0 0 14 24" fill="#fff">
        <path d="M3 0h2v7H3zM9 0h2v7H9zM1 7h12v5a5 5 0 0 1-5 5v7H6v-7a5 5 0 0 1-5-5z" />
      </svg>
    </Cell>
    <Cell className="w-6 ml-[5px]">
      <ChevronUp size={22} strokeWidth={1.5} color="#fff" />
    </Cell>
    <Cell className="w-6 ml-[5px]">
      <svg width="22" height="16" viewBox="0 0 22 16" fill="none" stroke="#ddd" strokeWidth="1.2">
        <path d="M1 5h3l5-4v14l-5-4H1zM14 5l6 6M20 5l-6 6" />
      </svg>
    </Cell>
    <Cell className="w-6 ml-2">
      <svg width="18" height="18" viewBox="0 0 18 18" fill="none" stroke="#bbb">
        <path d="M1 17C1 8 8 1 17 1M5 17c0-7 5-12 12-12M9 17c0-4 3-8 8-8" />
        <circle cx="14" cy="15" r="1.5" fill="#eee" stroke="none" />
      </svg>
    </Cell>
    <span className="w-[28px] ml-[10px] text-[13px] leading-none text-[#ddd]">ENG</span>
    <div className="flex flex-col items-center w-[82px] ml-[13px] gap-[6px] text-[14px] leading-[17px] text-[#ddd] whitespace-nowrap">
      <span>2:01 PM</span>
      <span>2016-12-05</span>
    </div>
    <Cell className="w-6 ml-[19px]">
      <svg width="20" height="22" viewBox="0 0 20 22" fill="#fff">
        <path d="M0 0h20v17h-7l-3 4-3-4H0z" />
        <path d="M4 5h12M4 8.500h12M4 12h8" stroke="#000" />
      </svg>
    </Cell>
    <div className="w-[29px]" />
  </div>
);

export default function App() {
  return (
    <div className="flex flex-col w-[1920px] h-[1080px] overflow-hidden bg-white font-['Open_Sans',sans-serif]">
      <TitleBar />
      <Tabs />
      <Ribbon />
      <Workspace />
      <StatusBar />
      <Taskbar />
    </div>
  );
}
